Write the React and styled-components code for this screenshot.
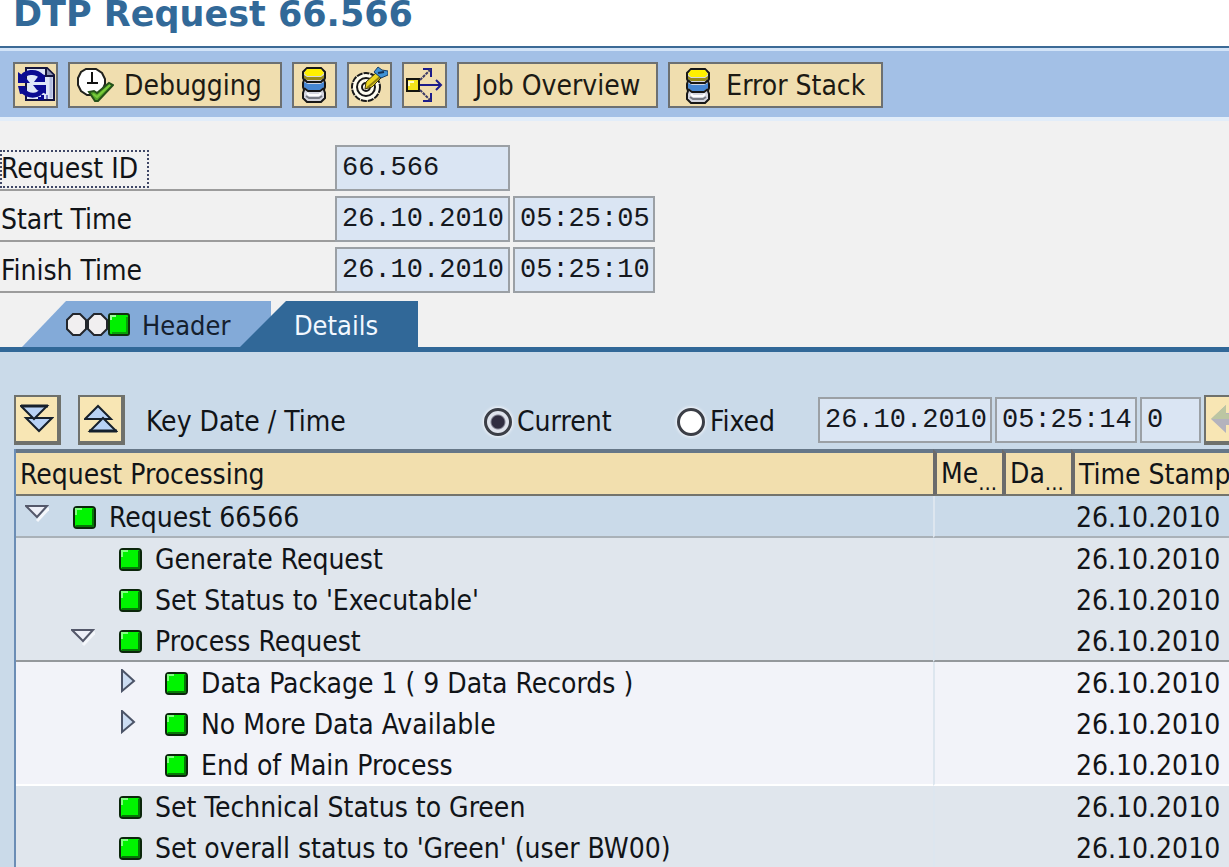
import React, { useState } from 'react';
import styled, { createGlobalStyle } from 'styled-components';

const tree = [
  { level: 0, label: 'Request 66566', arrow: 'open', tone: 'root', line: '#a9b1b8' },
  { level: 1, label: 'Generate Request' },
  { level: 1, label: "Set Status to 'Executable'" },
  { level: 1, label: 'Process Request', arrow: 'open', line: '#94989c' },
  { level: 2, label: 'Data Package 1 ( 9 Data Records )', arrow: 'closed', tone: 'leaf' },
  { level: 2, label: 'No More Data Available', arrow: 'closed', tone: 'leaf' },
  { level: 2, label: 'End of Main Process', tone: 'leaf', line: '#ffffff' },
  { level: 1, label: 'Set Technical Status to Green' },
  { level: 1, label: "Set overall status to 'Green' (user BW00)" },
];

const tones = {
  root: '#cadae9',
  leaf: '#f2f3f9',
  step: '#e0e6ed',
};

const RefreshIcon = () => (
  <svg width="38" height="38" viewBox="0 0 38 38">
    <path d="M9 2H30L37 9V34H9Z" fill="#dfe6f8" stroke="#14143c" strokeWidth="2" />
    <path d="M34 11V32" stroke="#b3bde0" strokeWidth="3" />
    <path d="M29 2V10H37" fill="#8f95b5" stroke="#14143c" strokeWidth="2" />
    <path d="M4 14C7 5 19 4 25 11" fill="none" stroke="#0b0b92" strokeWidth="5" />
    <path d="M1 6V17H13L9 12Z" fill="#0b0b92" />
    <path d="M26 22C23 31 12 31 6 25" fill="none" stroke="#0b0b92" strokeWidth="5" />
    <path d="M29 28V19H16L20 24Z" fill="#0b0b92" />
    <path d="M1 20L3 28L11 27L8 20Z" fill="#0b0b92" />
    <path d="M17 16H28V9L23 8Z" fill="#0b0b92" />
    <path d="M21 34V31H24V29H27V34Z" fill="#0b0b92" />
    <path d="M30 33V29" fill="none" stroke="#0b0b92" strokeWidth="1" />
  </svg>
);

const ClockIcon = () => (
  <svg width="38" height="38" viewBox="0 0 38 38">
    <path
      d="M10 2H20L26 6L29 12V17L26 24L20 28H11L5 24L2 18V11L5 5Z"
      fill="#ffffff"
      stroke="#20201c"
      strokeWidth="2"
    />
    <path d="M16 5V16H22M11 16H16" fill="none" stroke="#111111" strokeWidth="2" />
    <path d="M13 25L18 24L21 26L33 16L37 18L22 34H19Z" fill="#56a829" stroke="#25511a" strokeWidth="2" />
    <path d="M17 27L21 30L34 18" fill="none" stroke="#7acb3c" strokeWidth="2" />
  </svg>
);

const StackIcon = () => (
  <svg width="24" height="36" viewBox="0 0 24 36">
    <path
      d="M5 1H19L23 5V11L22 13L23 16V20L22 23L23 26V31L19 35H5L1 31V26L2 23L1 20V16L2 13L1 11V5Z"
      fill="#d4d6e0"
      stroke="#171717"
      strokeWidth="2"
    />
    <path d="M5 2H19L22 6L19 9H5L2 6Z" fill="#fff000" />
    <path d="M2 8L5 10H19L22 8V11L19 13H5L2 11Z" fill="#998c18" />
    <path d="M2 15L6 17H18L22 15V20L18 23H6L2 20Z" fill="#4686d2" />
    <path d="M2 12L5 15H19L22 12" fill="none" stroke="#171717" strokeWidth="2" />
    <path d="M2 21L6 24H18L22 21" fill="none" stroke="#171717" strokeWidth="2" />
    <path d="M4 29L7 31H17L20 29" fill="none" stroke="#777b85" strokeWidth="2" />
    <path d="M5 26L7 28H17L19 26" fill="none" stroke="#ffffff" strokeWidth="2" />
  </svg>
);

const TargetIcon = () => (
  <svg width="38" height="38" viewBox="0 0 38 38">
    <circle cx="16" cy="21" r="14" fill="#fffdf0" stroke="#181818" strokeWidth="2" strokeDasharray="6 1" />
    <circle cx="16" cy="21" r="9" fill="#fffdf0" stroke="#181818" strokeWidth="2" />
    <circle cx="16" cy="21" r="4" fill="#fffdf0" stroke="#181818" strokeWidth="2" />
    <path d="M15 23L16 16L27 6L32 11L22 21Z" fill="#ecd622" stroke="#3b350c" strokeWidth="1" />
    <path d="M17 22L30 11" stroke="#8f7f10" strokeWidth="2" />
    <path d="M24 6L28 1L32 4L38 5V9L31 12Z" fill="#3f93d6" stroke="#183d66" strokeWidth="1" />
    <path d="M28 7L34 6" stroke="#142f52" strokeWidth="2" />
  </svg>
);

const SplitIcon = () => (
  <svg width="38" height="38" viewBox="0 0 38 38">
    <rect x="2" y="13" width="12" height="12" fill="#f3e41a" stroke="#14140c" strokeWidth="2" />
    <path d="M4 16H9M4 15V20" fill="none" stroke="#fffcc0" strokeWidth="2" />
    <path d="M15 19H36M31 14L36 19L31 24" fill="none" stroke="#1c1c8a" strokeWidth="2" />
    <path d="M18 3H26V11M18 35H26V27" fill="none" stroke="#1c1c8a" strokeWidth="2" />
    <path d="M15 14L26 3M15 24L26 35" stroke="#3a3a66" strokeWidth="2" strokeDasharray="3 1" />
  </svg>
);

const ExpandIcon = () => (
  <svg width="34" height="34" viewBox="0 0 34 34">
    <path d="M6 16H32L19 29Z" fill="#b8d2f6" stroke="#16202c" strokeWidth="2" />
    <path d="M1 4H27L14 17Z" fill="#b8d2f6" stroke="#16202c" strokeWidth="2" />
    <path d="M1 4H28" stroke="#16202c" strokeWidth="3" />
  </svg>
);

const CollapseIcon = () => (
  <svg width="34" height="34" viewBox="0 0 34 34">
    <path d="M1 17H27L14 4Z" fill="#b8d2f6" stroke="#16202c" strokeWidth="2" />
    <path d="M6 29H32L19 16Z" fill="#b8d2f6" stroke="#16202c" strokeWidth="2" />
    <path d="M5 29H33" stroke="#16202c" strokeWidth="3" />
  </svg>
);

const BackIcon = () => (
  <svg width="34" height="34" viewBox="0 0 34 34">
    <path d="M1 17L16 3V11H31V23H16V31Z" fill="#b4b3bd" />
    <path d="M1 17L16 3V12H31V17Z" fill="#bcc6a2" />
  </svg>
);

const LightsIcon = () => (
  <svg width="66" height="24" viewBox="0 0 66 24">
    <path d="M8 1H15L21 7V16L15 22H8L2 16V7Z" fill="#f1eff0" stroke="#23262c" strokeWidth="2" />
    <path d="M29 1H36L42 7V16L36 22H29L23 16V7Z" fill="#f1eff0" stroke="#23262c" strokeWidth="2" />
    <rect x="44" y="1" width="20" height="21" rx="2" fill="#00f000" stroke="#10300f" strokeWidth="2" />
    <path d="M47 20H62V4" fill="none" stroke="#08a008" strokeWidth="2" />
    <path d="M46 7V3H51" fill="none" stroke="#9dff9d" strokeWidth="2" />
  </svg>
);

const GreenLight = () => (
  <svg width="24" height="24" viewBox="0 0 24 24">
    <rect x="1" y="1" width="21" height="21" rx="3" fill="#00f400" stroke="#0b260b" strokeWidth="2" />
    <path d="M3 20H20V3" fill="none" stroke="#067806" strokeWidth="2" />
    <path d="M3 9V3H9" fill="none" stroke="#80ff80" strokeWidth="2" />
  </svg>
);

const OpenArrow = () => (
  <svg width="24" height="24" viewBox="0 0 24 24">
    <path d="M12 18L24 5" stroke="#f4f7fb" strokeWidth="3" />
    <path d="M1 3H22L12 14Z" fill="#eef0f8" stroke="#54586a" strokeWidth="2" />
  </svg>
);

const ClosedArrow = () => (
  <svg width="24" height="24" viewBox="0 0 24 24">
    <path d="M5 1V22L17 12Z" fill="#ccdcf2" stroke="#4c5468" strokeWidth="2" />
  </svg>
);

const App = () => {
  const [tab, setTab] = useState('details');
  const [mode, setMode] = useState('current');

  return (
    <Page>
      <GlobalStyle />
      <Title>DTP Request 66.566</Title>
      <Toolbar>
        <ToolButton aria-label="Refresh">
          <RefreshIcon />
        </ToolButton>
        <ToolButton $wide>
          <ClockIcon />
          Debugging
        </ToolButton>
        <ToolButton aria-label="Data">
          <StackIcon />
        </ToolButton>
        <ToolButton aria-label="Target">
          <TargetIcon />
        </ToolButton>
        <ToolButton aria-label="Distribute">
          <SplitIcon />
        </ToolButton>
        <ToolButton $text>Job Overview</ToolButton>
        <ToolButton $text>
          <StackIcon />
          Error Stack
        </ToolButton>
      </Toolbar>

      <Form>
        <FormRow>
          <FormLabel htmlFor="request-id">
            <Focused>Request ID</Focused>
          </FormLabel>
          <Field id="request-id" $width={175} defaultValue="66.566" readOnly />
        </FormRow>
        <FormRow>
          <FormLabel htmlFor="start-date">Start Time</FormLabel>
          <Field id="start-date" $width={175} defaultValue="26.10.2010" readOnly />
          <Field aria-label="Start clock time" $width={142} defaultValue="05:25:05" readOnly />
        </FormRow>
        <FormRow>
          <FormLabel htmlFor="finish-date">Finish Time</FormLabel>
          <Field id="finish-date" $width={175} defaultValue="26.10.2010" readOnly />
          <Field aria-label="Finish clock time" $width={142} defaultValue="05:25:10" readOnly />
        </FormRow>
      </Form>

      <Tabs role="tablist">
        <HeaderTab role="tab" aria-selected={tab === 'header'} onClick={() => setTab('header')}>
          <LightsIcon />
          Header
        </HeaderTab>
        <DetailsTab role="tab" aria-selected={tab === 'details'} onClick={() => setTab('details')}>
          Details
        </DetailsTab>
      </Tabs>

      <Panel>
        <Controls>
          <SmallButton aria-label="Expand all">
            <ExpandIcon />
          </SmallButton>
          <SmallButton aria-label="Collapse all">
            <CollapseIcon />
          </SmallButton>
          <KeyDate>Key Date / Time</KeyDate>
          <Choice $width={193}>
            <Radio type="radio" name="mode" checked={mode === 'current'} onChange={() => setMode('current')} />
            Current
          </Choice>
          <Choice $width={141}>
            <Radio type="radio" name="mode" checked={mode === 'fixed'} onChange={() => setMode('fixed')} />
            Fixed
          </Choice>
          <DateGroup>
            <Field aria-label="Key date" $width={174} defaultValue="26.10.2010" readOnly />
            <Field aria-label="Key time" $width={142} defaultValue="05:25:14" readOnly />
            <Field aria-label="Offset" $width={61} defaultValue="0" readOnly />
            <SmallButton aria-label="Previous">
              <BackIcon />
            </SmallButton>
          </DateGroup>
        </Controls>

        <Table>
          <colgroup>
            <col />
            <Col $width={69} />
            <Col $width={69} />
            <Col $width={158} />
          </colgroup>
          <thead>
            <tr>
              <Th>Request Processing</Th>
              <Th>
                Me<Dots>...</Dots>
              </Th>
              <Th>
                Da<Dots>...</Dots>
              </Th>
              <Th>Time Stamp</Th>
            </tr>
          </thead>
          <tbody>
            {tree.map((row) => (
              <Row key={row.label} $tone={row.tone || 'step'} $line={row.line}>
                <Cell>
                  <Node $level={row.level}>
                    <ArrowSlot>
                      {row.arrow === 'open' && <OpenArrow />}
                      {row.arrow === 'closed' && <ClosedArrow />}
                    </ArrowSlot>
                    <GreenLight />
                    {row.label}
                  </Node>
                </Cell>
                <Cell $divided />
                <Cell />
                <Cell>26.10.2010</Cell>
              </Row>
            ))}
          </tbody>
        </Table>
      </Panel>
    </Page>
  );
};

export default App;

const GlobalStyle = createGlobalStyle`
  * {
    box-sizing: border-box;
  }
  body {
    margin: 0;
    overflow-x: hidden;
    background: #f1f1f1;
  }
  svg {
    display: block;
    flex-shrink: 0;
  }
  button {
    font-family: inherit;
    cursor: pointer;
  }
`;

const Page = styled.div`
  overflow: hidden;
  font-family: 'DejaVu Sans Condensed', 'Noto Sans', sans-serif;
  font-size: 28px;
  line-height: 40px;
  color: #111418;
  white-space: nowrap;
`;

const Title = styled.h1`
  margin: 0;
  height: 48px;
  padding-left: 13px;
  background: #ffffff;
  border-bottom: 2px solid #3c6a96;
  color: #326998;
  font-family: 'DejaVu Sans', sans-serif;
  font-size: 35px;
  font-weight: bold;
  line-height: 28px;
`;

const Toolbar = styled.div`
  display: flex;
  gap: 10px;
  padding: 11px 13px 9px;
  background: #a3c0e6;
  border-top: 3px solid #d3e4f8;
  border-bottom: 4px solid #e2edf9;
`;

const ToolButton = styled.button`
  display: flex;
  align-items: center;
  justify-content: center;
  flex-shrink: 0;
  gap: ${(props) => (props.$text ? '16px' : '10px')};
  height: 46px;
  min-width: 45px;
  padding: ${(props) => (props.$text ? '2px 16px 0' : props.$wide ? '2px 18px 0 6px' : '0')};
  background: #f0deaf;
  border: 2px solid #6c7072;
  color: #1c1a14;
  font-size: 28px;
  line-height: 40px;
`;

const Form = styled.div`
  display: flex;
  flex-direction: column;
  gap: 5px;
  padding: 24px 0 8px;
`;

const FormRow = styled.div`
  display: flex;
  gap: 3px;
`;

const FormLabel = styled.label`
  display: flex;
  align-items: center;
  width: 335px;
  height: 46px;
  margin-right: -3px;
  padding: 4px 0 0 1px;
  border-bottom: 2px solid #9c9c9c;
`;

const Focused = styled.span`
  outline: 2px dotted #3f4766;
  outline-offset: -1px;
  padding-right: 10px;
  line-height: 36px;
`;

const Field = styled.input`
  width: ${(props) => props.$width}px;
  height: 46px;
  flex-shrink: 0;
  padding: 0 0 0 5px;
  border: 2px solid #9ba0a5;
  border-radius: 0;
  background: #dae5f3;
  color: #15181e;
  font-family: 'Liberation Mono', monospace;
  font-size: 27px;
`;

const Tabs = styled.div`
  display: flex;
  padding-left: 22px;
  border-bottom: 5px solid #316898;
`;

const HeaderTab = styled.button`
  display: flex;
  align-items: center;
  gap: 11px;
  width: 249px;
  height: 46px;
  padding: 2px 0 0 43px;
  border: none;
  background: #83aad8;
  color: #15202e;
  font-size: 27px;
  clip-path: polygon(44px 0, 100% 0, 100% 100%, 0 100%);
`;

const DetailsTab = styled.button`
  width: 178px;
  height: 46px;
  margin-left: -31px;
  padding: 2px 0 0 14px;
  border: none;
  background: #316898;
  color: #f2f8ff;
  font-size: 27px;
  clip-path: polygon(46px 0, 100% 0, 100% 100%, 0 100%);
`;

const Panel = styled.div`
  padding: 43px 0 0 14px;
  background: #cadae9;
`;

const Controls = styled.div`
  display: flex;
  align-items: center;
  height: 54px;
  padding-bottom: 4px;
`;

const SmallButton = styled.button`
  display: flex;
  align-items: center;
  justify-content: center;
  flex-shrink: 0;
  width: 47px;
  height: 50px;
  margin-right: 17px;
  padding: 0;
  background: #f8e6b4;
  border: solid #6f716c;
  border-width: 2px 4px 4px 2px;
`;

const KeyDate = styled.span`
  flex-shrink: 0;
  width: 338px;
  margin-left: 4px;
  padding-top: 4px;
`;

const Choice = styled.label`
  display: flex;
  align-items: center;
  flex-shrink: 0;
  gap: 5px;
  width: ${(props) => props.$width}px;
  padding-top: 4px;
`;

const Radio = styled.input`
  appearance: none;
  flex-shrink: 0;
  width: 28px;
  height: 28px;
  margin: 0;
  border: 3px solid #3b3e46;
  border-radius: 50%;
  background: #ffffff;
  box-shadow: 0 0 3px 1px #f4f6fb;

  &:checked {
    background: radial-gradient(circle, #302d40 6px, #dfe3ec 8px);
  }
`;

const DateGroup = styled.div`
  display: flex;
  align-items: center;
  flex-shrink: 0;
  gap: 3px;
`;

const Table = styled.table`
  width: 100%;
  table-layout: fixed;
  border-collapse: separate;
  border-spacing: 0;
  border-left: 2px solid #6b8db5;
`;

const Col = styled.col`
  width: ${(props) => props.$width}px;
`;

const Th = styled.th`
  height: 45px;
  padding: 3px 0 0 4px;
  background: #f2dfae;
  border-top: 4px solid #667788;
  border-bottom: 2px solid #74746c;
  border-left: 4px solid #6b6b6b;
  font-weight: normal;
  line-height: 36px;
  text-align: left;

  &:first-child {
    border-left: none;
  }
`;

const Dots = styled.sub`
  font-size: 22px;
  line-height: 1;
`;

const Row = styled.tr`
  background: ${(props) => tones[props.$tone]};

  td {
    height: ${(props) => (props.$line ? '42px' : '41px')};
    border-bottom: ${(props) => (props.$line ? `2px solid ${props.$line}` : 'none')};
  }
`;

const Cell = styled.td`
  padding: 4px 0 0 ${(props) => (props.$divided ? '0' : '5px')};
  border-left: ${(props) => (props.$divided ? '2px solid #dde6ef' : 'none')};
  line-height: 36px;
`;

const Node = styled.div`
  display: flex;
  align-items: center;
  gap: 12px;
  padding-left: ${(props) => 4 + props.$level * 46}px;
`;

const ArrowSlot = styled.span`
  width: 36px;
  padding-bottom: 6px;
`;
